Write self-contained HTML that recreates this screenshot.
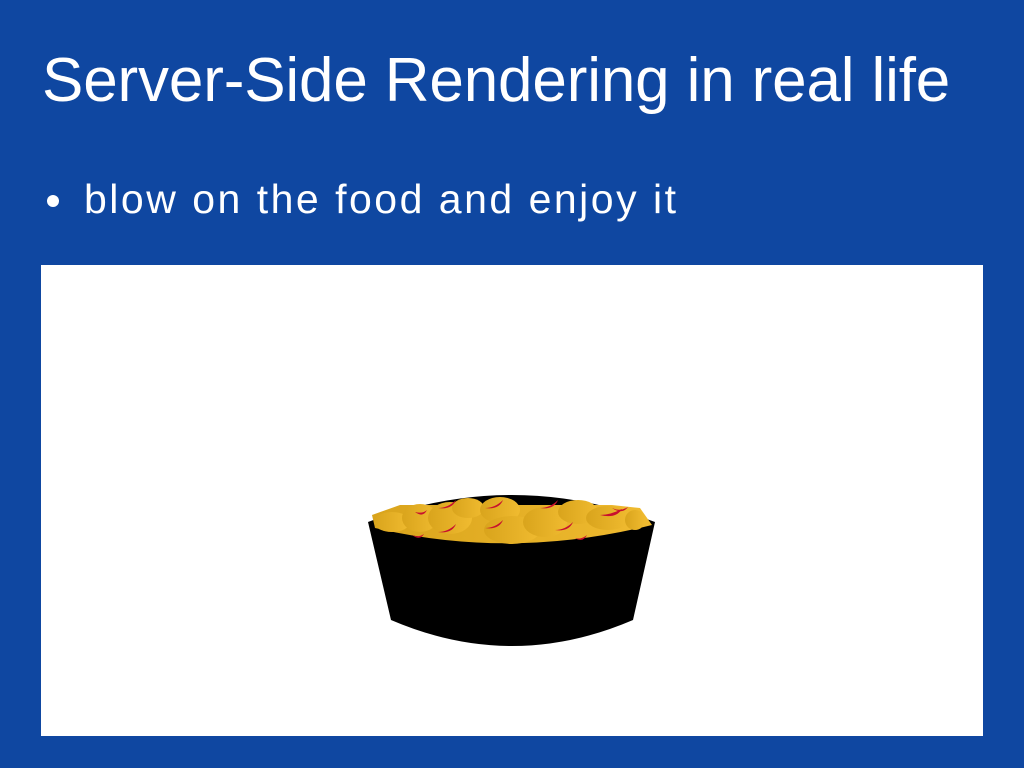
<!DOCTYPE html>
<html><head><style>
html,body{margin:0;padding:0}
body{width:1024px;height:768px;background:#0f47a1;position:relative;overflow:hidden;font-family:"Liberation Sans",sans-serif;color:#fff}
h1{position:absolute;left:42px;top:46px;margin:0;font-size:62px;font-weight:normal;letter-spacing:-0.15px;white-space:nowrap;line-height:70px}
.b{position:absolute;left:84px;top:177px;font-size:41px;white-space:nowrap;line-height:44px;letter-spacing:2.5px}
.dot{position:absolute;left:47px;top:195px;width:12px;height:12px;border-radius:50%;background:#fff}
.img{position:absolute;left:41px;top:265px;width:942px;height:471px;background:#fff}
</style></head><body>
<h1>Server-Side Rendering in real life</h1>
<div class="dot"></div>
<div class="b">blow on the food and enjoy it</div>
<div class="img"></div>
<svg style="position:absolute;left:0;top:0" width="1024" height="768">
<defs><linearGradient id="g" x1="0" x2="1"><stop offset="0" stop-color="#d9a41c"/><stop offset="1" stop-color="#f0bb30"/></linearGradient></defs>
<path d="M368 522 Q512 468 655 522 L633 620 Q512 672 391 620 Z" fill="#000"/>
<clipPath id="c"><path d="M372 515 L400 505 L520 495 L640 508 L652 525 Q512 560 375 528 Z"/></clipPath>
<g fill="url(#g)" clip-path="url(#c)">
<rect x="370" y="505" width="285" height="60"/>
</g>
<g fill="url(#g)">
<ellipse cx="392" cy="522" rx="18" ry="10"/><ellipse cx="420" cy="518" rx="18" ry="14"/>
<ellipse cx="450" cy="518" rx="22" ry="16"/><ellipse cx="468" cy="508" rx="16" ry="10"/>
<ellipse cx="500" cy="510" rx="20" ry="13"/><ellipse cx="512" cy="530" rx="28" ry="14"/>
<ellipse cx="545" cy="522" rx="22" ry="15"/><ellipse cx="578" cy="512" rx="20" ry="12"/>
<ellipse cx="608" cy="518" rx="22" ry="12"/><ellipse cx="635" cy="520" rx="10" ry="10"/>
</g>
<g fill="#c8102e">
<path d="M415 512 q8 2 12 -2 q-4 8 -12 2z"/><path d="M438 508 q10 0 18 -8 q-4 10 -18 8z"/>
<path d="M485 508 q10 0 18 -8 q-4 10 -18 8z"/><path d="M540 508 q10 0 18 -8 q-4 10 -18 8z"/>
<path d="M600 515 q10 0 22 -6 q-6 10 -22 6z"/><path d="M438 532 q10 0 18 -8 q-4 10 -18 8z"/>
<path d="M485 528 q10 0 18 -8 q-4 10 -18 8z"/><path d="M555 530 q10 0 18 -8 q-4 10 -18 8z"/>
<path d="M612 508 q8 4 16 -1 q-6 8 -16 1z"/><path d="M575 538 q6 2 12 -3 q-4 8 -12 3z"/>
<path d="M412 535 q6 3 12 -1 q-4 7 -12 1z"/>
</g>
</svg>
</body></html>
